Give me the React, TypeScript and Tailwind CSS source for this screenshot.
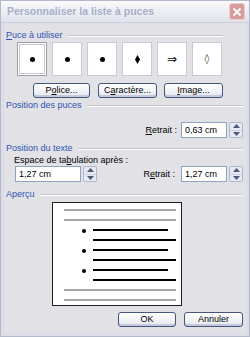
import React from "react";

const font = { fontFamily: "'Liberation Sans', Arial, sans-serif" };

function Header({ children }: { children: React.ReactNode }) {
  return (
    <div className="flex items-center h-[13px] text-[9px] leading-[13px] text-[#3054b4]">
      <span className="whitespace-nowrap">{children}</span>
      <div className="flex-1 ml-[5px] h-[2px] border-t border-b border-t-[#c6c6ce] border-b-white" />
    </div>
  );
}

function Spinner() {
  return (
    <div className="w-[14px] h-[16px] ml-[2px] flex flex-col border border-[#b2b8cc] rounded-[2px] bg-[#e6e9f2]">
      <div className="flex-1 flex items-center justify-center border-b border-[#cbd0dc]">
        <svg width="7" height="4" viewBox="0 0 7 4"><path d="M0 4 L3.5 0 L7 4 Z" fill="#4a5a7c" /></svg>
      </div>
      <div className="flex-1 flex items-center justify-center">
        <svg width="7" height="4" viewBox="0 0 7 4"><path d="M0 0 L3.5 4 L7 0 Z" fill="#4a5a7c" /></svg>
      </div>
    </div>
  );
}

function Field({ value, width }: { value: string; width: string }) {
  return (
    <div className="flex items-center">
      <div className={`${width} h-[16px] bg-white border border-[#8fa3c0] flex items-center pl-[3px] text-[9px] leading-none text-black whitespace-nowrap`}>
        {value}
      </div>
      <Spinner />
    </div>
  );
}

function XPButton({ children, w }: { children: React.ReactNode; w: string }) {
  return (
    <div
      className={`${w} h-[15px] flex items-center justify-center text-[9px] leading-none whitespace-nowrap text-black rounded-[3px] border border-[#46557a] bg-gradient-to-b from-white to-[#e6e8f0] shadow-[inset_0_-2px_0_#c4cadd]`}
    >
      {children}
    </div>
  );
}

function BulletBox({ children, selected }: { children: React.ReactNode; selected?: boolean }) {
  return (
    <div
      className={`w-[30px] h-[34px] bg-white flex items-center justify-center text-black ${
        selected ? "border border-[#a0a0a8] outline outline-1 outline-[#c8c8d0] -outline-offset-[3px]" : "border border-[#cacad2]"
      }`}
    >
      {children}
    </div>
  );
}

function Dot() {
  return <div className="w-[5px] h-[5px] rounded-full bg-black" />;
}

function Line({ gray, short }: { gray?: boolean; short?: boolean }) {
  return <div className={`h-[2px] ${gray ? "bg-[#a6a6a6]" : "bg-black"} ${short ? "w-[75px]" : ""}`} />;
}

export default function App() {
  return (
    <div style={font} className="w-[250px] h-[337px] flex flex-col bg-[#e1e1e6] border border-[#b4b8ca]">
      {/* title bar */}
      <div className="h-[22px] shrink-0 flex items-center justify-between pl-[6px] pr-[4px] bg-gradient-to-b from-[#fafafc] to-[#e0e2ec] border-b border-[#cdd0dc]">
        <span className="text-[10.5px] font-bold text-[#a8afc8] whitespace-nowrap">
          Personnaliser la liste à puces
        </span>
        <div className="w-[16px] h-[17px] rounded-[3px] bg-[#d89c9c] border border-[#ebcaca] flex items-center justify-center">
          <svg width="10" height="10" viewBox="0 0 10 10">
            <path d="M1.5 1.5 L8.5 8.5 M8.5 1.5 L1.5 8.5" stroke="white" strokeWidth="1.8" />
          </svg>
        </div>
      </div>

      <div className="flex-1 flex flex-col border-x-[3px] border-b-[3px] border-[#dcdde6] pl-[2px] pr-[3px]">
        <div className="mt-[6px] pr-[20px]">
          <Header>
            <span className="underline">P</span>uce à utiliser
          </Header>
        </div>

        {/* bullets */}
        <div className="flex gap-[5px] pl-[11px]">
          <BulletBox selected><Dot /></BulletBox>
          <BulletBox><Dot /></BulletBox>
          <BulletBox><Dot /></BulletBox>
          <BulletBox>
            <svg width="5" height="9" viewBox="0 0 5 9"><path d="M2.5 0 L5 4.5 L2.5 9 L0 4.5 Z" fill="black" /></svg>
          </BulletBox>
          <BulletBox><span className="text-[12px] leading-none" style={{ fontFamily: "'DejaVu Sans', sans-serif" }}>⇒</span></BulletBox>
          <BulletBox><span className="text-[10px] leading-none text-[#333]" style={{ fontFamily: "'DejaVu Sans', sans-serif" }}>◊</span></BulletBox>
        </div>

        {/* buttons */}
        <div className="flex pl-[27px] mt-[7px]">
          <XPButton w="w-[57px]">P<span className="underline">o</span>lice...</XPButton>
          <div className="w-[8px]" />
          <XPButton w="w-[59px]">C<span className="underline">a</span>ractère...</XPButton>
          <div className="w-[7px]" />
          <XPButton w="w-[59px]"><span className="underline">I</span>mage...</XPButton>
        </div>

        <div className="mt-[1px]">
          <Header>Position des puces</Header>
        </div>

        <div className="flex items-center justify-end mt-[10px]">
          <span className="text-[9px] leading-none text-black mr-[4px] whitespace-nowrap"><span className="underline">R</span>etrait :</span>
          <Field value="0,63 cm" width="w-[46px]" />
        </div>

        <div className="mt-[4px]">
          <Header>Position du texte</Header>
        </div>

        <div className="h-[11px] text-[9px] leading-[11px] text-black pl-[8px] whitespace-nowrap">
          Espace de ta<span className="underline">b</span>ulation après :
        </div>

        <div className="flex items-center justify-between pl-[9px]">
          <Field value="1,27 cm" width="w-[66px]" />
          <div className="flex items-center">
            <span className="text-[9px] leading-none text-black mr-[6px] whitespace-nowrap">R<span className="underline">e</span>trait :</span>
            <Field value="1,27 cm" width="w-[46px]" />
          </div>
        </div>

        <div className="mt-[6px]">
          <Header>Aperçu</Header>
        </div>

        {/* preview */}
        <div className="ml-[46px] mt-[1px] w-[130px] h-[104px] shrink-0 bg-white border border-[#1e1e1e] flex flex-col gap-[8px] pl-[11px] pr-[5px] pt-[6px]">
          <Line gray />
          <Line gray />
          {[0, 1, 2].map((i) => (
            <React.Fragment key={i}>
              <div className="h-[2px] flex items-center">
                <div className="w-[29px] h-[2px] flex items-center justify-end pr-[7px]">
                  <div className="w-[4px] h-[4px] rounded-full bg-black mt-[1px]" />
                </div>
                <Line short />
              </div>
              <div className="h-[2px] pl-[29px]">
                <Line />
              </div>
            </React.Fragment>
          ))}
          <Line gray />
          <Line gray />
        </div>

        <div className="flex justify-end mt-[6px]">
          <XPButton w="w-[58px]">OK</XPButton>
          <div className="w-[8px]" />
          <XPButton w="w-[59px]">Annuler</XPButton>
        </div>
      </div>
    </div>
  );
}
